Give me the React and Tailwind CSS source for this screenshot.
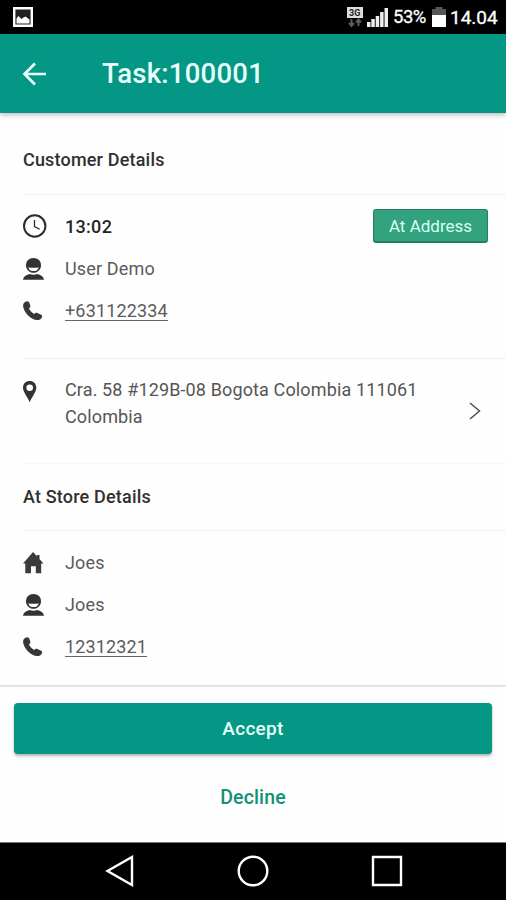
import React from "react";

function PersonIcon() {
  return (
    <svg width="22" height="22" viewBox="0 0 22 22" fill="#333">
      <path d="M10.500 0C6 0 3 3 3 7.200c0 4.200 3.200 7.600 7.500 7.600S18 11.400 18 7.200C18 3 15 0 10.500 0Z" />
      <path d="M5.300 9.400q5.200.8 10.400 0c-.5 2.200-2.500 3.700-5.200 3.700s-4.700-1.500-5.200-3.700Z" fill="#fff" />
      <path d="M0 21.700c.2-3 2.600-4.800 6.500-5.800q4 1.600 8 0c3.900 1 6.300 2.800 6.500 5.800Z" />
    </svg>
  );
}

function PhoneIcon() {
  return (
    <svg width="20" height="20" viewBox="0 0 20 20" fill="#383838">
      <path d="M.6 2.600C1.200 1.200 2.600.2 4.200.2c1.300 0 1.900.8 2.200 1.700l.9 2.700c.3 1.100-.1 1.800-.8 2.300l-.6.500c1.100 2.200 2.900 4.100 5.200 5.500l.9-.7c.7-.6 1.700-.6 2.500-.2l3.100 1.500c1.400.6 1.900 1.600 1.400 2.800-.8 1.900-2.700 3-4.900 2.800C8.400 18.600 1.300 12.200.1 5.400 0 4.400.2 3.500.6 2.600Z" />
    </svg>
  );
}

function ClockIcon() {
  return (
    <svg width="24" height="24" viewBox="0 0 24 24" fill="none" stroke="#2b2b2b">
      <circle cx="11.700" cy="12" r="10.700" strokeWidth="2" />
      <path d="M11.500 6v6.500l5.200 2.800" strokeWidth="1.300" />
    </svg>
  );
}

function HomeIcon() {
  return (
    <svg width="21" height="22" viewBox="0 0 21 22" fill="#3b3b3b">
      <path d="M10 0 14 4.200V3h2.500v4l4 4.500h-2.300v9.700h-5.400v-7H8v7H2.300v-9.700H0Z" />
    </svg>
  );
}

function PinIcon() {
  return (
    <svg width="14" height="22" viewBox="0 0 14 22" fill="#333">
      <path fillRule="evenodd" d="M6.700 0C2.900 0 0 2.700 0 6.600c0 4.500 4.500 9.400 6.700 14.700 2.200-5.300 6.600-10.200 6.600-14.700C13.300 2.700 10.400 0 6.700 0Zm0 3.400a3.300 3.300 0 1 1 0 6.600 3.300 3.300 0 0 1 0-6.600Z" />
    </svg>
  );
}

function StatusBar() {
  return (
    <div className="flex h-[34px] items-center bg-black pl-[13px] pr-[8px] text-white">
      <svg width="20" height="20" viewBox="0 0 20 20" className="-mt-px">
        <path d="M1.200 1.200h17.600v17.600H1.200Z" fill="#222" stroke="#fff" strokeWidth="2.400" />
        <path d="M3.500 16.500v-5l2-2.500 3 3 2-1.500 2-1 4 3v4Z" fill="#fff" />
      </svg>
      <svg width="17" height="21" viewBox="0 0 17 21" className="ml-auto">
        <path d="M0 0h16v11H0Z" fill="#ddd" />
        <text x="2" y="9" fontSize="9" fontWeight="700" fill="#222" className="font-['Roboto',sans-serif]">3G</text>
        <path d="M4.500 12v7M2 16l2.500 3L7 16M11.500 19v-6M9 15.500l2.500-3 2.500 3" fill="none" stroke="#5c5c5c" strokeWidth="2" />
      </svg>
      <svg width="21" height="21" viewBox="0 0 21 21" className="ml-[3px]" fill="#eee">
        <path d="M0 15h3.500v5H0ZM4.300 12h3.500v8H4.300ZM8.700 9h3.500v11H8.700ZM13.100 5h3.500v15h-3.500ZM17.500 1H21v19h-3.500Z" />
      </svg>
      <span className="ml-[5px] w-[34px] whitespace-nowrap pt-px text-[18.500px] leading-none tracking-[-0.5px] [-webkit-text-stroke:0.3px_#fff]">53%</span>
      <svg width="14" height="20" viewBox="0 0 14 20" className="ml-[5px]">
        <path d="M3.500 0h7v2H14v18H0V2h3.500Z" fill="#555" />
        <path d="M0 8h14v12H0Z" fill="#fff" />
      </svg>
      <span className="ml-[4px] w-[48px] whitespace-nowrap pt-px text-[19px] leading-none [-webkit-text-stroke:0.3px_#fff]">14.04</span>
    </div>
  );
}

function Row({ icon, children }) {
  return (
    <div className="flex h-[42px] items-center">
      <div className="w-[42px] shrink-0">{icon}</div>
      {children}
    </div>
  );
}

const value = "text-[18px] leading-[20px] tracking-[0.15px] text-[#5b5b5b]";
const link = "border-b border-[#666] text-[18px] leading-[18px] tracking-[0.15px] text-[#5b5b5b]";
const heading = "flex h-[67px] items-center pb-[2px] text-[18px] font-medium tracking-[0.18px] text-[#303030]";

export default function App() {
  return (
    <div className="flex h-[900px] w-[506px] flex-col overflow-hidden bg-[#fefefe] font-['Roboto',sans-serif]">
      <StatusBar />
      <header className="z-10 flex h-[79px] shrink-0 items-center bg-[#049786] pl-[22px] text-white shadow-[0_2px_5px_rgba(0,0,0,0.25)]">
        <svg width="25" height="24" viewBox="0 0 25 24" fill="none" stroke="#e8fffa" strokeWidth="2.700">
          <path d="M24 12H3M13 1.500 2.500 12 13 22.500" />
        </svg>
        <h1 className="ml-[55px] text-[27.500px] font-medium leading-none tracking-[0.25px] text-[#e9fffb]">Task:100001</h1>
      </header>

      <main className="flex h-[572px] shrink-0 flex-col pl-[23px]">
        <h2 className={heading + " mt-[14px]"}>Customer Details</h2>
        <section className="h-[164px] border-t border-[#f2f2f2] pt-[10px]">
          <Row icon={<ClockIcon />}>
            <span className="text-[18px] font-medium tracking-[0.3px] text-[#252525]">13:02</span>
            <button className="ml-auto mr-[18px] h-[34px] w-[115px] rounded-[3px] border border-b-2 border-[#267e62] bg-[#32a37e] pt-[2px] text-[17px] leading-none text-[#d8fff0]">
              At Address
            </button>
          </Row>
          <Row icon={<div className="pt-[2px]"><PersonIcon /></div>}><span className={value + " mt-[2px]"}>User Demo</span></Row>
          <Row icon={<div className="pt-[2px]"><PhoneIcon /></div>}><a className={link + " mt-[2px]"}>+631122334</a></Row>
        </section>
        <section className="flex h-[105px] border-t border-[#f0f0f0]">
          <div className="w-[42px] shrink-0 pt-[22px]"><PinIcon /></div>
          <p className="w-[370px] pt-[17px] text-[18px] leading-[27px] tracking-[0.13px] text-[#555]">
            Cra. 58 #129B-08 Bogota Colombia 111061 Colombia
          </p>
          <svg width="12" height="18" viewBox="0 0 12 18" fill="none" stroke="#505050" strokeWidth="1.500" className="ml-[34px] mt-[43px]">
            <path d="M1 1l9.500 8L1 17" />
          </svg>
        </section>
        <h2 className={heading + " border-t border-[#f7f7f7]"}>At Store Details</h2>
        <section className="border-t border-[#f2f2f2] pt-[11px]">
          <Row icon={<HomeIcon />}><span className={value}>Joes</span></Row>
          <Row icon={<PersonIcon />}><span className={value}>Joes</span></Row>
          <Row icon={<PhoneIcon />}><a className={link}>12312321</a></Row>
        </section>
      </main>

      <footer className="flex h-[157px] shrink-0 flex-col items-center border-t-2 border-[#e4e4e4] px-[14px] pt-[16px]">
        <button className="h-[51px] w-full rounded-[4px] bg-[#049786] pt-[2px] text-[19px] font-medium tracking-[0.3px] text-[#e9fffb] shadow-[0_2px_3px_rgba(0,0,0,0.3)]">
          Accept
        </button>
        <button className="mt-[30px] text-[19.500px] font-medium leading-[28px] tracking-[0.15px] text-[#129178]">Decline</button>
      </footer>

      <nav className="flex h-[58px] shrink-0 items-center border-t border-[#777] bg-black pl-[105px]">
        <svg width="30" height="32" viewBox="0 0 30 32" fill="none" stroke="#fff" strokeWidth="2.400" className="-mt-[2px]">
          <path d="M27 2v28L2.500 16Z" />
        </svg>
        <svg width="32" height="32" viewBox="0 0 32 32" fill="none" stroke="#fff" strokeWidth="2.400" className="-mt-[2px] ml-[102px]">
          <circle cx="16" cy="16" r="14.300" />
        </svg>
        <svg width="32" height="32" viewBox="0 0 32 32" fill="none" stroke="#fff" strokeWidth="2.400" className="-mt-[2px] ml-[102px]">
          <path d="M2 2h28v28H2Z" />
        </svg>
      </nav>
    </div>
  );
}
